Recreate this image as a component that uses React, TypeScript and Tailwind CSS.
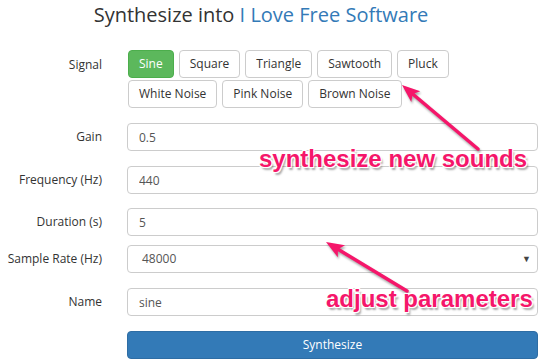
import React from "react";

/* signal choices ─────────────────────────────────────────────────────────── */

const ROW_ONE = ["Sine", "Square", "Triangle", "Sawtooth", "Pluck"];
const ROW_TWO = ["White Noise", "Pink Noise", "Brown Noise"];

function SigBtn({ label, active }: { label: string; active?: boolean }) {
  return (
    <button
      type="button"
      className={
        active
          ? "h-[28px] rounded-[4px] border border-[#4cae4c] bg-[#5cb85c] px-[10px] text-[12px] text-white"
          : "h-[28px] rounded-[4px] border border-[#ccc] bg-white px-[10px] text-[12px] text-[#333]"
      }
    >
      {label}
    </button>
  );
}

function Row({ label, children, className = "" }: { label: string; children: React.ReactNode; className?: string }) {
  return (
    <div className={`flex items-center ${className}`}>
      <label className="w-[102px] shrink-0 text-right text-[12px] text-[#333]">{label}</label>
      <div className="ml-[25px] w-[411px]">{children}</div>
    </div>
  );
}

function Field({ value }: { value: string }) {
  return (
    <input
      readOnly
      value={value}
      className="h-[28px] w-full rounded-[4px] border border-[#ccc] bg-white px-[11px] text-[12px] text-[#555] outline-none"
    />
  );
}

/* pink annotation arrows ─────────────────────────────────────────────────── */

function Arrow({ tip, tail }: { tip: [number, number]; tail: [number, number] }) {
  const dx = tip[0] - tail[0];
  const dy = tip[1] - tail[1];
  const len = Math.hypot(dx, dy);
  const ux = dx / len;
  const uy = dy / len;
  const bx = tip[0] - ux * 18;
  const by = tip[1] - uy * 18;
  const nx = -uy * 7;
  const ny = ux * 7;
  return (
    <g>
      <line x1={tail[0]} y1={tail[1]} x2={bx + ux * 4} y2={by + uy * 4} stroke="#f5166a" strokeWidth={3.5} strokeLinecap="round" />
      <polygon points={`${tip[0]},${tip[1]} ${bx + nx},${by + ny} ${bx + ux * 4},${by + uy * 4} ${bx - nx},${by - ny}`} fill="#f5166a" />
    </g>
  );
}

export default function App() {
  return (
    <div className="relative h-[362px] w-[550px] overflow-hidden bg-white font-['Open_Sans',sans-serif]">
      <h1 className="w-[522px] pt-[1px] text-center text-[20px] leading-[28px] text-[#333]">
        Synthesize into <span className="text-[#337ab7]">I Love Free Software</span>
      </h1>

      <div className="mt-[21px] flex items-start">
        <label className="w-[102px] shrink-0 pt-[6px] text-right text-[12px] text-[#333]">Signal</label>
        <div className="ml-[26px] flex flex-col gap-[2px]">
          <div className="flex gap-[5px]">
            {ROW_ONE.map((s, i) => (
              <SigBtn key={s} label={s} active={i === 0} />
            ))}
          </div>
          <div className="flex gap-[5px]">
            {ROW_TWO.map((s) => (
              <SigBtn key={s} label={s} />
            ))}
          </div>
        </div>
      </div>

      <Row label="Gain" className="mt-[15px]">
        <Field value="0.5" />
      </Row>
      <Row label="Frequency (Hz)" className="mt-[15px]">
        <Field value="440" />
      </Row>
      <Row label="Duration (s)" className="mt-[14px]">
        <Field value="5" />
      </Row>
      <Row label="Sample Rate (Hz)" className="mt-[9px]">
        <div className="flex h-[28px] w-full items-center justify-between rounded-[4px] border border-[#ccc] bg-white pl-[14px] pr-[6px] text-[12px] text-[#555]">
          <span>48000</span>
          <span className="text-[9px] text-[#444]">▼</span>
        </div>
      </Row>
      <Row label="Name" className="mt-[15px]">
        <Field value="sine" />
      </Row>
      <div className="mt-[15px] ml-[127px] w-[411px]">
        <button
          type="button"
          className="h-[28px] w-full rounded-[4px] border border-[#2e6da4] bg-[#337ab7] text-[12px] text-white"
        >
          Synthesize
        </button>
      </div>

      <svg
        className="pointer-events-none absolute left-0 top-0 drop-shadow-[1px_2px_1px_rgba(0,0,0,0.35)]"
        width={550}
        height={362}
      >
        <Arrow tip={[402, 85]} tail={[478, 149]} />
        <Arrow tip={[326, 242]} tail={[407, 291]} />
      </svg>

      <div className="absolute left-[259px] top-[145px] font-['Liberation_Sans',Arial,sans-serif] text-[24px] leading-[28px] font-bold text-[#f5166a] [text-shadow:-1px_-1px_0_#fff,1px_-1px_0_#fff,-1px_1px_0_#fff,1px_1px_0_#fff,2px_3px_2px_rgba(0,0,0,0.35)]">
        synthesize new sounds
      </div>
      <div className="absolute left-[326px] top-[285px] font-['Liberation_Sans',Arial,sans-serif] text-[24px] leading-[28px] font-bold text-[#f5166a] [text-shadow:-1px_-1px_0_#fff,1px_-1px_0_#fff,-1px_1px_0_#fff,1px_1px_0_#fff,2px_3px_2px_rgba(0,0,0,0.35)]">
        adjust parameters
      </div>
    </div>
  );
}
